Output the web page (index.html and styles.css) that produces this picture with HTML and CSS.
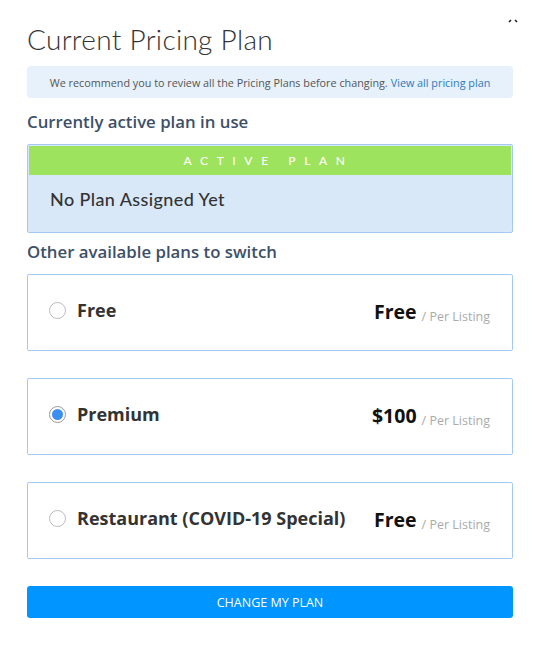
FILE: index.html
```html
<!DOCTYPE html>
<html>
<head>
<meta charset="utf-8">
<link rel="stylesheet" href="styles.css">
</head>
<body>
<div class="modal">
  <span class="close"><svg width="10" height="6" viewBox="0 0 10 6"><path d="M1 4 L3 2 M9 4 L7 2" stroke="#222" stroke-width="1.6"/></svg></span>
  <h1 class="title">Current Pricing Plan</h1>
  <div class="notice">We recommend you to review all the Pricing Plans before changing. <a href="#" class="notice-link">View all pricing plan</a></div>
  <h2 class="section-title">Currently active plan in use</h2>
  <div class="active-box">
    <div class="active-head">ACTIVE PLAN</div>
    <div class="active-body">No Plan Assigned Yet</div>
  </div>
  <h2 class="section-title second">Other available plans to switch</h2>
  <div class="plans">
    <label class="plan">
      <span class="radio"></span>
      <span class="plan-name">Free</span>
      <span class="price"><span class="amount">Free</span><span class="per">/ Per Listing</span></span>
    </label>
    <label class="plan">
      <span class="radio checked"></span>
      <span class="plan-name">Premium</span>
      <span class="price"><span class="amount">$100</span><span class="per">/ Per Listing</span></span>
    </label>
    <label class="plan">
      <span class="radio"></span>
      <span class="plan-name">Restaurant (COVID-19 Special)</span>
      <span class="price"><span class="amount">Free</span><span class="per">/ Per Listing</span></span>
    </label>
  </div>
  <button class="change-btn">CHANGE MY PLAN</button>
</div>
</body>
</html>
```
FILE: styles.css
```css
html, body {
  margin: 0;
  padding: 0;
  background: #fff;
}
body {
  font-family: "Open Sans", "Liberation Sans", sans-serif;
  width: 536px;
  height: 647px;
  overflow: hidden;
}
.modal {
  position: relative;
  padding: 21px 23px 0 27px;
}
.close {
  position: absolute;
  top: 18px;
  left: 508px;
  line-height: 0;
}
.title {
  margin: 0;
  font-family: "Lato", sans-serif;
  font-weight: 300;
  font-size: 28px;
  line-height: 37px;
  color: #333;
  letter-spacing: 0.3px;
}
.notice {
  margin-top: 8px;
  height: 32px;
  background: #e6f1fb;
  border-radius: 4px;
  font-size: 10.8px;
  color: #555;
  display: flex;
  align-items: center;
  justify-content: center;
}
.notice-link {
  color: #2b7bc3;
  text-decoration: none;
  margin-left: 3px;
}
.section-title {
  margin: 13px 0 0;
  font-size: 16.8px;
  font-weight: 600;
  color: #3d5068;
  line-height: 22px;
}
.section-title.second {
  margin-top: 8px;
}
.active-box {
  margin-top: 11px;
  border: 1px solid #a6c9f2;
  border-radius: 2px;
  background: #d9e8f8;
  height: 89px;
  box-sizing: border-box;
  padding: 1px 1px 0 1px;
}
.active-head {
  background: #9de35e;
  height: 29px;
  display: flex;
  align-items: center;
  justify-content: center;
  color: #fff;
  font-size: 12px;
  letter-spacing: 8.6px;
  font-family: "Lato", sans-serif;
  font-weight: 500;
  padding-right: 3px;
}
.active-body {
  padding: 13px 0 0 21px;
  font-size: 18px;
  font-weight: 500;
  color: #333;
  font-family: "Lato", sans-serif;
  letter-spacing: 0.4px;
}
.plans {
  margin-top: 11px;
  display: flex;
  flex-direction: column;
  gap: 27px;
}
.plan {
  height: 77px;
  box-sizing: border-box;
  border: 1px solid #a6c9f2;
  border-radius: 2px;
  display: flex;
  align-items: center;
  padding: 0 22px 6px 21px;
}
.radio {
  width: 17px;
  height: 17px;
  border: 1px solid #bbb;
  border-radius: 50%;
  box-sizing: border-box;
  flex: none;
  margin-right: 11px;
  margin-top: 2px;
  position: relative;
  background: #fff;
}
.radio.checked {
  border-color: #999;
}
.radio.checked::after {
  content: "";
  position: absolute;
  left: 2px;
  top: 2px;
  width: 11px;
  height: 11px;
  border-radius: 50%;
  background: #3b8ef2;
}
.plan-name {
  font-size: 18px;
  font-weight: 700;
  color: #333;
  flex: 1;
}
.price {
  display: flex;
  align-items: baseline;
  position: relative;
  top: 2px;
}
.amount {
  font-size: 19.5px;
  font-weight: 700;
  color: #111;
}
.per {
  font-size: 12.5px;
  color: #aaa;
  margin-left: 5px;
  position: relative;
  top: 2px;
}
.change-btn {
  margin-top: 27px;
  width: 100%;
  height: 32px;
  border: none;
  border-radius: 3px;
  background: #0095ff;
  color: #fff;
  font-family: "Open Sans", sans-serif;
  font-size: 12.5px;
  padding: 0;
}
```
